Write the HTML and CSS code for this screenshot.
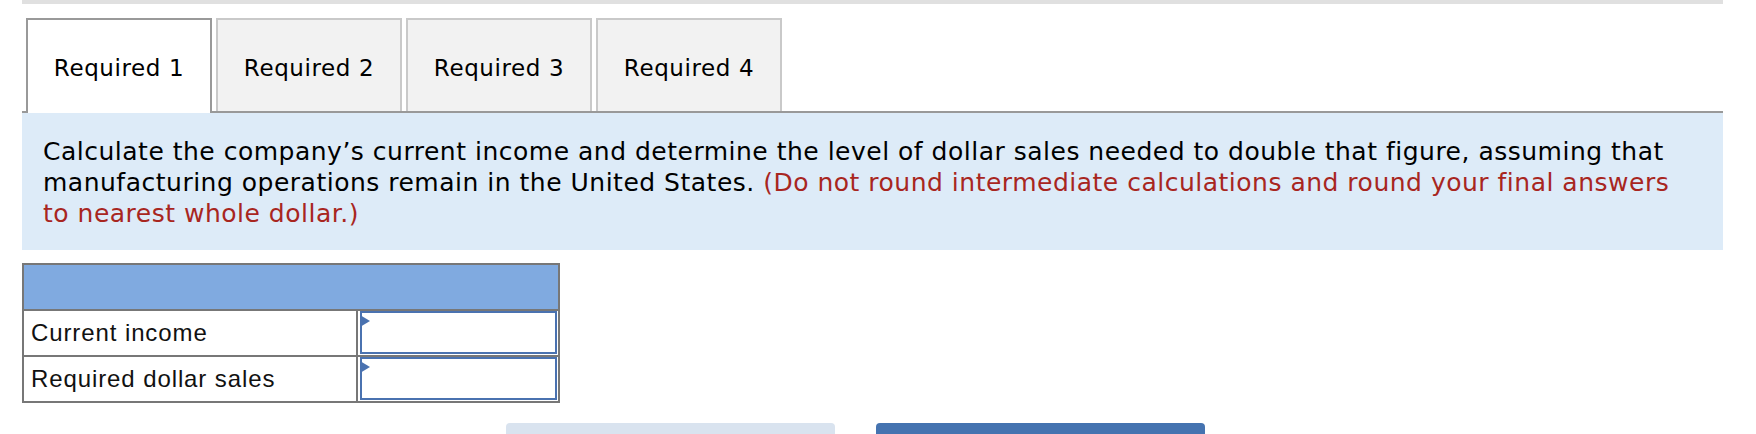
FILE: index.html
```html
<!DOCTYPE html>
<html>
<head>
<meta charset="utf-8">
<link rel="stylesheet" href="styles.css">
</head>
<body>
<div class="page">
  <div class="topbar"></div>
  <div class="tabs">
    <div class="tab active">Required 1</div>
    <div class="tab">Required 2</div>
    <div class="tab">Required 3</div>
    <div class="tab">Required 4</div>
  </div>
  <div class="panel">
    <p class="question">Calculate the company’s current income and determine the level of dollar sales needed to double that figure, assuming that<br>manufacturing operations remain in the United States. <span class="note">(Do not round intermediate calculations and round your final answers<br>to nearest whole dollar.)</span></p>
  </div>
  <div class="grid">
    <div class="head"></div>
    <div class="label">Current income</div>
    <div class="cell"><div class="input"><span class="flag"></span></div></div>
    <div class="label">Required dollar sales</div>
    <div class="cell"><div class="input"><span class="flag"></span></div></div>
  </div>
  <div class="buttons">
    <div class="btn prev"></div>
    <div class="btn next"></div>
  </div>
</div>
</body>
</html>
```
FILE: styles.css
```css
html, body {
  margin: 0;
  padding: 0;
  background: #fff;
}
.page {
  margin-left: 22px;
  width: 1701px;
}
.topbar {
  height: 4px;
  background: #e0e0e0;
}
.tabs {
  display: flex;
  gap: 4px;
  padding-left: 4px;
  margin-top: 14px;
  border-bottom: 2px solid #999;
}
.tab {
  box-sizing: border-box;
  width: 186px;
  height: 93px;
  padding-top: 5px;
  border: 2px solid #c9c9c9;
  border-bottom: none;
  background: #f2f2f2;
  display: flex;
  align-items: center;
  justify-content: center;
  font-family: "DejaVu Sans", Verdana, sans-serif;
  font-size: 23px;
  letter-spacing: 0.6px;
  color: #000;
}
.tab.active {
  background: #fff;
  border-color: #999;
  height: 95px;
  margin-bottom: -2px;
  padding-top: 3px;
}
.panel {
  background: #ddebf8;
  padding: 23px 21px 21px;
}
.question {
  margin: 0;
  font-family: "DejaVu Sans", Verdana, sans-serif;
  font-size: 25px;
  letter-spacing: 0.5px;
  line-height: 31px;
  color: #000;
}
.note {
  color: #a8261f;
}
.grid {
  margin-top: 13px;
  width: 534px;
  display: grid;
  grid-template-columns: 332px 200px;
  grid-auto-rows: 44px;
  gap: 2px;
  border: 2px solid #777;
  background: #777;
}
.head {
  grid-column: 1 / 3;
  background: #80aae0;
}
.label {
  background: #fff;
  padding-left: 7px;
  display: flex;
  align-items: center;
  font-family: "Liberation Sans", Arial, sans-serif;
  font-size: 24px;
  letter-spacing: 0.9px;
  color: #111;
}
.cell {
  background: #fff;
  padding: 0 1px 1px 2px;
  display: flex;
}
.input {
  position: relative;
  flex: 1;
  border: 2px solid #4a72b0;
}
.flag {
  position: absolute;
  left: -2px;
  top: 2px;
  width: 0;
  height: 0;
  border-left: 10px solid #4a72b0;
  border-top: 6px solid transparent;
  border-bottom: 6px solid transparent;
}
.buttons {
  display: flex;
  gap: 41px;
  padding-left: 484px;
  margin-top: 20px;
}
.btn {
  width: 329px;
  height: 40px;
  border-radius: 4px 4px 0 0;
}
.prev {
  background: #d9e3ef;
}
.next {
  background: #4573b0;
}
```
